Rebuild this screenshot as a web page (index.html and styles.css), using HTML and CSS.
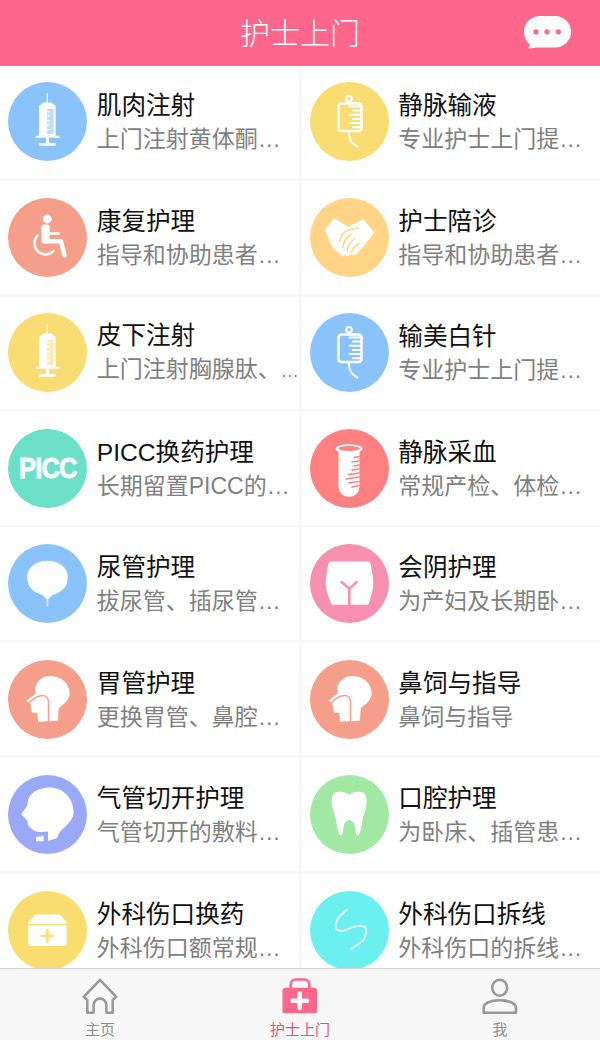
FILE: index.html
```html
<!DOCTYPE html>
<html lang="zh-CN">
<head>
<meta charset="utf-8">
<title>护士上门</title>
<link rel="stylesheet" href="styles.css">
</head>
<body>
<svg class="sprite" xmlns="http://www.w3.org/2000/svg">
  <symbol id="i-syringe" viewBox="0 0 79 79">
    <path class="w" d="M38.7 11h1.2v9.4h3.2l4.5 3.3v30h4v2H41v5.4h6.6v2.7H31v-2.7h7v-5.4H27.6v-2h3.4v-30l4.5-3.3h3.2z"/>
    <path class="c soft" d="M39 27h6.5v25H39z"/>
    <path class="w" d="M39 29h3v1.2h-3zM39 33.5h3v1.2h-3zM39 38h3v1.2h-3zM39 42.500h3v1.2h-3zM39 47h3v1.200h-3z"/>
  </symbol>
  <symbol id="i-bag" viewBox="0 0 79 79">
    <circle class="ln" cx="39" cy="16.800" r="2.800"/>
    <rect class="ln s25" x="28.500" y="21.500" width="23" height="27.500" rx="3"/>
    <path class="ln" d="M39.500 24.500H51M43 28.600H51M39.500 32.800H51M43 37H51M39.500 41.100H51M43 45.200H51"/>
    <path class="ln" d="M39 49v3c0 6 4 10.500 8.300 12.400"/>
  </symbol>
  <symbol id="i-wheel" viewBox="0 0 79 79">
    <circle class="w" cx="39.300" cy="21" r="4.400"/>
    <rect class="w" x="33.300" y="26.500" width="8.300" height="19" rx="3"/>
    <path class="ln s45" d="M37.500 43.300H53L56.500 57.500"/>
    <path class="ln s25" d="M40 35.500H50.500"/>
    <path class="ln s25" d="M29.500 37.500A11 11 0 1 0 45.500 53"/>
  </symbol>
  <symbol id="i-hands" viewBox="0 0 79 79">
    <path class="w round" d="M16 32 24.500 21.500 38.300 30 53 22.500 63 34.700 53 47.500 45 56 40.500 55 38 57 34 55 33.300 57.700 23.800 49.800z"/>
    <path class="ln-c thin" d="M29.500 44C30 38 34 33 41 31.500L48 30M33 49.500C33 44 37 39 41 36.500M37 53C37 49 40 44.500 45 40.500M41.500 54.500C42 51 45 48 49 45.500"/>
  </symbol>
  <symbol id="i-tube" viewBox="0 0 79 79">
    <path class="w" d="M28.500 22h21v35.500a10.500 10.500 0 0 1-21 0z"/>
    <ellipse class="w" cx="39" cy="19.700" rx="13.500" ry="4.500"/>
    <ellipse class="c" cx="39" cy="19.600" rx="10.500" ry="2.500"/>
    <path class="ln-c thin" d="M44 28.500 49 27.500M42 33 49 32M44 37 49 36M42 41 49 40M38.500 45.500 49 44M36 50 49 48M38.500 54 49 52.500M42 58 49 56.500"/>
  </symbol>
  <symbol id="i-bladder" viewBox="0 0 79 79">
    <path class="w" d="M39.500 16.700C50.700 16.700 59.700 23 59.700 33 59.700 44 53 48 46 50.500 43.500 51.500 42 53 41 55H38C37 53 35.500 51.500 33 50.500 26 48 19.200 44 19.200 33 19.200 23 28.300 16.700 39.500 16.700z"/>
    <path class="w fade" d="M38.600 54h1.800v8.500h-1.800z"/>
  </symbol>
  <symbol id="i-hip" viewBox="0 0 79 79">
    <path class="w" d="M21.500 17.400H57.500C60 17.400 60.500 19 61 22 62 28 63.300 33 63.300 39 63.300 47 60 55 58.300 60.700H21.700C19.500 55 15.700 47 15.700 39 15.700 33 17 28 18 22 18.500 19 19 17.400 21.500 17.400z"/>
    <path class="ln-c s25" d="M31.700 38 39.300 44.700 46.700 38M39.300 44.700V60.700"/>
  </symbol>
  <symbol id="i-head" viewBox="0 0 79 79">
    <path class="w" d="M41.600 16C53 16 61.600 23 61.600 33.300 61.600 40 56 44 51.500 47.500 50 49 50.500 55 50 60.700L30 61.700 29.300 53 24.500 52.500C23 51 23.300 46.500 22.300 43.500L18.300 41 27.800 33.500C27.300 30 27 28 28 25 31 19 36 16 41.600 16z"/>
    <path class="ln-c thin" d="M21.500 42.500C25 39 30 35.500 34.500 35.500 38.500 35.500 40.500 38.500 40.500 42V62"/>
  </symbol>
  <symbol id="i-trachea" viewBox="0 0 79 79">
    <path class="w" d="M41.600 12.600C55 12.600 65.600 23 65.600 37.600 65.600 46 56 52 51.500 57.500 49.500 60 50.500 62.500 48 63.500L40 66V56.500C35 57 30 57.500 26.600 56 23 54 20.500 51 19.500 49 21 47 19 45 13.300 39.300 15 36 19.500 32 19.800 28 20 19 30 12.600 41.600 12.600z"/>
    <path class="w" d="M28.500 61.500H33.500V60.500H35.600V66.300H28z"/>
  </symbol>
  <symbol id="i-tooth" viewBox="0 0 79 79">
    <path class="w" d="M39.200 20C36 17 31 16.500 27 17 22 18 21.500 24 21.800 28 22 34 25 39 26 45 27 51 28 60 31 60.300 33 60.500 33 54 34 50 35 47 37 45 39.200 45 41.500 45 43.500 47 44.500 50 45.500 54 45.500 60.500 47.500 60.300 50.500 60 51.500 51 52.500 45 53.500 39 56.500 34 56.600 28 56.900 24 56 18 51.500 17 47.500 16.500 42.500 17 39.200 20z"/>
  </symbol>
  <symbol id="i-kit" viewBox="0 0 79 79">
    <path class="w" d="M29 23.600H50.500C52 23.600 52.500 24.500 53.500 25.500L58.600 31V33H20.300V31L26 25.500C27 24.500 27.500 23.600 29 23.600z"/>
    <path class="w" d="M20.300 34.500H58.600V52.500A2.500 2.500 0 0 1 56.100 55H22.800A2.500 2.500 0 0 1 20.300 52.500z"/>
    <path class="ln-c s25" d="M33.800 45H45M39.400 39.500V50.500"/>
  </symbol>
  <symbol id="i-suture" viewBox="0 0 79 79">
    <path class="ln s16" d="M37 18.600C31 23 25 30 25.600 35 26 40 31 41 36 39 42 36 50 34 54.500 36 58 38 56 46 51.600 51 48 54 44 56 41 57.600"/>
  </symbol>
</svg>

<div class="app">
  <header class="top">
    <span></span>
    <h1 class="top-title">护士上门</h1>
    <div class="top-action">
      <svg class="bubble" viewBox="0 0 47 33" aria-hidden="true">
        <path class="bubble-shape" d="M16 0H31C40 0 47 7 47 15.800S40 31.600 31 31.600H12C9 32.500 6 32.500 3.500 32 5 31 5.500 29.500 5.500 28.200 2 25.500 0 21 0 15.800 0 7 7 0 16 0z"/>
        <circle class="bubble-dot" cx="12" cy="15.800" r="2.600"/>
        <circle class="bubble-dot" cx="23" cy="15.800" r="2.600"/>
        <circle class="bubble-dot" cx="34.300" cy="15.800" r="2.600"/>
      </svg>
    </div>
  </header>

  <main class="list">
    <article class="tile"><div class="disc blue"><svg class="ico"><use href="#i-syringe"/></svg></div><div class="copy"><h2>肌肉注射</h2><p>上门注射黄体酮…</p></div></article>
    <article class="tile"><div class="disc yellow"><svg class="ico"><use href="#i-bag"/></svg></div><div class="copy"><h2>静脉输液</h2><p>专业护士上门提…</p></div></article>
    <article class="tile"><div class="disc salmon"><svg class="ico"><use href="#i-wheel"/></svg></div><div class="copy"><h2>康复护理</h2><p>指导和协助患者…</p></div></article>
    <article class="tile"><div class="disc apricot"><svg class="ico"><use href="#i-hands"/></svg></div><div class="copy"><h2>护士陪诊</h2><p>指导和协助患者…</p></div></article>
    <article class="tile"><div class="disc yellow"><svg class="ico"><use href="#i-syringe"/></svg></div><div class="copy"><h2>皮下注射</h2><p>上门注射胸腺肽、<span class="dots">…</span></p></div></article>
    <article class="tile"><div class="disc blue"><svg class="ico"><use href="#i-bag"/></svg></div><div class="copy"><h2>输美白针</h2><p>专业护士上门提…</p></div></article>
    <article class="tile"><div class="disc mint"><span class="picc">PICC</span></div><div class="copy"><h2>PICC换药护理</h2><p>长期留置PICC的…</p></div></article>
    <article class="tile"><div class="disc red"><svg class="ico"><use href="#i-tube"/></svg></div><div class="copy"><h2>静脉采血</h2><p>常规产检、体检…</p></div></article>
    <article class="tile"><div class="disc blue"><svg class="ico"><use href="#i-bladder"/></svg></div><div class="copy"><h2>尿管护理</h2><p>拔尿管、插尿管…</p></div></article>
    <article class="tile"><div class="disc pink"><svg class="ico"><use href="#i-hip"/></svg></div><div class="copy"><h2>会阴护理</h2><p>为产妇及长期卧…</p></div></article>
    <article class="tile"><div class="disc salmon"><svg class="ico"><use href="#i-head"/></svg></div><div class="copy"><h2>胃管护理</h2><p>更换胃管、鼻腔…</p></div></article>
    <article class="tile"><div class="disc salmon"><svg class="ico"><use href="#i-head"/></svg></div><div class="copy"><h2>鼻饲与指导</h2><p>鼻饲与指导</p></div></article>
    <article class="tile"><div class="disc violet"><svg class="ico"><use href="#i-trachea"/></svg></div><div class="copy"><h2>气管切开护理</h2><p>气管切开的敷料…</p></div></article>
    <article class="tile"><div class="disc green"><svg class="ico"><use href="#i-tooth"/></svg></div><div class="copy"><h2>口腔护理</h2><p>为卧床、插管患…</p></div></article>
    <article class="tile"><div class="disc gold"><svg class="ico"><use href="#i-kit"/></svg></div><div class="copy"><h2>外科伤口换药</h2><p>外科伤口额常规…</p></div></article>
    <article class="tile"><div class="disc cyan"><svg class="ico"><use href="#i-suture"/></svg></div><div class="copy"><h2>外科伤口拆线</h2><p>外科伤口的拆线…</p></div></article>
  </main>

  <nav class="tabs">
    <a class="tab">
      <svg class="tab-ico" viewBox="0 0 36 36" aria-hidden="true"><path class="tab-ln" d="M18 1.800 1.800 18.800 5.300 22V34.700H11.600V27A6.400 6.400 0 0 1 24.400 27V34.700H30.700V22L34.200 18.800z"/></svg>
      <span>主页</span>
    </a>
    <a class="tab active">
      <svg class="tab-ico" viewBox="0 0 36 36" aria-hidden="true">
        <path class="tab-handle" d="M8.700 10V6.500A5 5 0 0 1 13.700 1.500H22.300A5 5 0 0 1 27.300 6.500V10"/>
        <rect class="tab-fill" x=".5" y="9.700" width="34.500" height="25.600" rx="2.500"/>
        <path class="tab-plus" d="M10.500 22.700H25M17.700 15.500V30"/>
      </svg>
      <span>护士上门</span>
    </a>
    <a class="tab">
      <svg class="tab-ico" viewBox="0 0 36 36" aria-hidden="true">
        <ellipse class="tab-ln" cx="17.700" cy="9.800" rx="7.500" ry="8"/>
        <path class="tab-ln" d="M1.700 34.700V30C1.700 25 9 22.300 17.700 22.300S34 25 34 30V34.700z"/>
      </svg>
      <span>我</span>
    </a>
  </nav>
</div>
</body>
</html>
```

FILE: styles.css
```css
* { box-sizing: border-box; }

html, body {
  margin: 0;
  padding: 0;
  height: 100%;
}

body {
  font-family: "Liberation Sans", "Noto Sans CJK SC", sans-serif;
  background: #f8f8f8;
}

.sprite { display: none; }

.app {
  display: flex;
  flex-direction: column;
  height: 1040px;
  overflow: hidden;
}

/* header */
.top {
  flex: 0 0 65.7px;
  display: grid;
  grid-template-columns: 1fr auto 1fr;
  align-items: center;
  background: #ff668c;
}

.top-title {
  margin: 0;
  padding-top: 3px;
  color: #fff;
  font-size: 30px;
  font-weight: 300;
  line-height: 1;
}

.top-action {
  display: flex;
  justify-content: flex-end;
  padding-right: 29px;
}

.bubble {
  display: block;
  width: 47px;
  height: 33px;
}

.bubble-shape { fill: #fff; }
.bubble-dot { fill: #ff668c; }

/* grid of services */
.list {
  flex: 1 1 0;
  min-height: 0;
  overflow: hidden;
  display: grid;
  grid-template-columns: repeat(2, minmax(0, 1fr));
  grid-auto-rows: 112.6px;
  gap: 2.85px 3px;
  align-content: start;
}

.tile {
  display: flex;
  align-items: center;
  gap: 9.6px;
  min-width: 0;
  padding-left: 8.2px;
  background: #fff;
  white-space: nowrap;
  overflow: hidden;
}

.disc {
  flex: 0 0 79px;
  height: 79px;
  border-radius: 50%;
  display: flex;
  align-items: center;
  justify-content: center;
}

.blue    { background: #8ac3fa; color: #8ac3fa; }
.yellow  { background: #f9dd72; color: #f9dd72; }
.gold    { background: #f9dd6e; color: #f9dd6e; }
.salmon  { background: #f59e8a; color: #f59e8a; }
.apricot { background: #ffd485; color: #ffd485; }
.mint    { background: #6be0c7; color: #6be0c7; }
.red     { background: #ff8080; color: #ff8080; }
.pink    { background: #f68fb0; color: #f68fb0; }
.violet  { background: #99a8f7; color: #99a8f7; }
.green   { background: #a0e8a3; color: #a0e8a3; }
.cyan    { background: #6cf0ef; color: #6cf0ef; }

.ico {
  display: block;
  width: 79px;
  height: 79px;
}

.w { fill: #fff; }
.c { fill: currentColor; }
.soft { opacity: .55; }
.fade { opacity: .6; }
.round { stroke: #fff; stroke-width: 2; stroke-linejoin: round; }

.ln, .ln-c {
  fill: none;
  stroke-width: 2;
  stroke-linecap: round;
  stroke-linejoin: round;
}

.ln { stroke: #fff; }
.ln-c { stroke: currentColor; }
.thin { stroke-width: 1.5; }
.s16 { stroke-width: 1.6; }
.s25 { stroke-width: 2.5; }
.s45 { stroke-width: 4.5; }

.picc {
  display: inline-block;
  color: #fff;
  font-size: 30px;
  font-weight: 700;
  letter-spacing: -1px;
  line-height: 1;
  transform: scaleX(.85);
  -webkit-text-stroke: .8px #fff;
}

.copy {
  min-width: 0;
  padding-top: 3px;
}

.copy h2 {
  margin: 0;
  color: #111;
  font-size: 24.6px;
  font-weight: 400;
  line-height: 33px;
}

.copy p {
  margin: 0;
  color: #808080;
  font-size: 23px;
  line-height: 35px;
}

.dots { font-size: 18px; }

/* tab bar */
.tabs {
  flex: 0 0 72px;
  display: grid;
  grid-template-columns: repeat(3, 1fr);
  border-top: 1px solid #cfcfcf;
  background: #f7f7f7;
}

.tab {
  display: flex;
  flex-direction: column;
  align-items: center;
  padding-top: 9px;
  color: #8e8e8e;
  font-size: 15px;
  line-height: 17px;
}

.tab.active { color: #d6567c; }

.tab-ico {
  display: block;
  width: 36px;
  height: 36px;
  margin-bottom: 7px;
}

.tab-ln {
  fill: none;
  stroke: #999;
  stroke-width: 2.6;
  stroke-linejoin: round;
}

.tab-handle {
  fill: none;
  stroke: #ff668c;
  stroke-width: 2.6;
}

.tab-fill { fill: #ff668c; }

.tab-plus {
  fill: none;
  stroke: #fff;
  stroke-width: 4.6;
  stroke-linecap: round;
}
```
